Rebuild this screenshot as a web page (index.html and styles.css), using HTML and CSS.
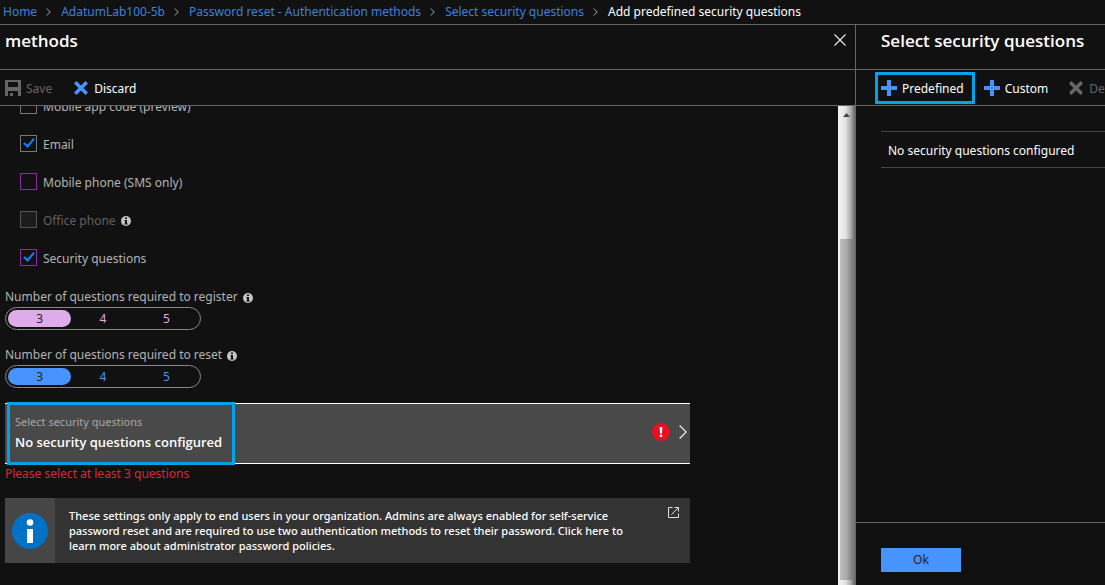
FILE: index.html
```html
<!DOCTYPE html>
<html lang="en">
<head>
<meta charset="utf-8">
<meta name="viewport" content="width=device-width, initial-scale=1">
<title>Select security questions</title>
<link rel="stylesheet" href="styles.css">
</head>
<body>
<svg class="sprite" aria-hidden="true">
  <symbol id="info" viewBox="0 0 10 10"><circle cx="5" cy="5" r="5" fill="#c4c4c4"/><path d="M4 1.500h2v1.600H4zM3.400 4H6v3.400h.7v1H3.300v-1H4V5h-.6z" fill="#111"/></symbol>
  <symbol id="plus" viewBox="0 0 16 16"><path d="M6 0h4v6h6v4h-6v6H6v-6H0V6h6z" fill="#4894fe"/></symbol>
  <symbol id="cross" viewBox="0 0 14 14"><path d="M2.500 0 7 4.500 11.500 0 14 2.500 9.500 7 14 11.500 11.500 14 7 9.500 2.500 14 0 11.500 4.500 7 0 2.500z" fill="currentColor"/></symbol>
  <symbol id="sep" viewBox="0 0 5 8"><path d="M.7.5 4.200 4 .7 7.500" fill="none" stroke="#aaa"/></symbol>
</svg>
<nav class="breadcrumb" aria-label="Breadcrumb">
  <a href="#">Home</a><svg class="sep"><use href="#sep"/></svg>
  <a href="#">AdatumLab100-5b</a><svg class="sep"><use href="#sep"/></svg>
  <a href="#">Password reset - Authentication methods</a><svg class="sep"><use href="#sep"/></svg>
  <a href="#">Select security questions</a><svg class="sep"><use href="#sep"/></svg>
  <span>Add predefined security questions</span>
</nav>
<main class="blades">
  <section class="blade methods">
    <header class="blade-head">
      <h1>methods</h1>
      <button class="close" type="button" aria-label="Close"><svg viewBox="0 0 12 12"><path d="M.5.5l11 11M11.500.5l-11 11" stroke="#eee" stroke-width="1.100"/></svg></button>
    </header>
    <div class="toolbar">
      <button type="button" disabled><svg class="tool-icon" viewBox="0 0 16 16"><path fill="#666" fill-rule="evenodd" d="M0 0h16v16h-3v-5H3v5H0zM3 2v5h10V2z"/><path fill="#666" d="M5 13h3v3H5z"/></svg><span>Save</span></button>
      <button type="button"><svg class="tool-icon cross"><use href="#cross"/></svg><span>Discard</span></button>
    </div>
    <div class="scroll">
      <form class="content">
        <label class="check"><input type="checkbox"><span>Mobile app code (preview)</span></label>
        <label class="check"><input type="checkbox" checked><span>Email</span></label>
        <label class="check edited"><input type="checkbox"><span>Mobile phone (SMS only)</span></label>
        <label class="check off"><input type="checkbox" disabled><span>Office phone</span><svg class="info"><use href="#info"/></svg></label>
        <label class="check edited"><input type="checkbox" checked><span>Security questions</span></label>
        <fieldset class="field edited">
          <legend>Number of questions required to register<svg class="info"><use href="#info"/></svg></legend>
          <div class="segments">
            <label><input type="radio" name="register" checked>3</label>
            <label><input type="radio" name="register">4</label>
            <label><input type="radio" name="register">5</label>
          </div>
        </fieldset>
        <fieldset class="field">
          <legend>Number of questions required to reset<svg class="info"><use href="#info"/></svg></legend>
          <div class="segments">
            <label><input type="radio" name="reset" checked>3</label>
            <label><input type="radio" name="reset">4</label>
            <label><input type="radio" name="reset">5</label>
          </div>
        </fieldset>
        <button class="selector" type="button">
          <span class="selector-text"><span class="selector-label">Select security questions</span><strong>No security questions configured</strong></span>
          <svg class="alert" viewBox="0 0 18 18"><circle cx="9" cy="9" r="9" fill="#e81123"/><path d="M7.600 4h2.800l-.5 6.500H8.100zM7.800 11.700h2.400V14H7.800z" fill="#fff"/></svg>
          <svg class="chevron" viewBox="0 0 8 14"><path d="M.6.5 7.200 7 .6 13.500" fill="none" stroke="#eee" stroke-width="1.200"/></svg>
        </button>
        <p class="error">Please select at least 3 questions</p>
        <a class="notice" href="#">
          <span class="notice-icon"><svg viewBox="0 0 36 36"><circle cx="18" cy="18" r="18" fill="#0072c6"/><circle cx="18" cy="9.500" r="3.300" fill="#fff"/><path d="M15 16h6v14h-6z" fill="#fff"/></svg></span>
          <span class="notice-text">These settings only apply to end users in your organization. Admins are always enabled for self-service password reset and are required to use two authentication methods to reset their password. Click here to learn more about administrator password policies.</span>
          <svg class="external" viewBox="0 0 11 11"><path d="M4.500.5h-4v10h10v-4M6.500.5h4v4M3.500 7.500l7-7" fill="none" stroke="#ddd"/></svg>
        </a>
      </form>
      <div class="scrollbar" aria-hidden="true">
        <svg class="arrow" viewBox="0 0 7 4"><path d="M0 4 3.500 0 7 4z" fill="#444"/></svg>
        <div class="thumb"></div>
      </div>
    </div>
  </section>
  <section class="blade questions">
    <header class="blade-head"><h2>Select security questions</h2></header>
    <div class="toolbar">
      <button class="marked" type="button"><svg class="tool-icon"><use href="#plus"/></svg><span>Predefined</span></button>
      <button type="button"><svg class="tool-icon"><use href="#plus"/></svg><span>Custom</span></button>
      <button type="button" disabled><svg class="tool-icon cross"><use href="#cross"/></svg><span>Delete</span></button>
    </div>
    <p class="empty">No security questions configured</p>
    <footer><button class="ok" type="button">Ok</button></footer>
  </section>
</main>
</body>
</html>
```
FILE: styles.css
```css
*, *::before, *::after { box-sizing: border-box; }
body {
  margin: 0;
  height: 100vh;
  display: flex;
  flex-direction: column;
  overflow: hidden;
  background: #111;
  color: #fff;
  font: 12px/16px "Noto Sans", "Open Sans", sans-serif;
}
h1, h2, p { margin: 0; }
button { font: inherit; color: inherit; background: none; border: 0; padding: 0; }
svg { flex: none; }
.sprite { position: absolute; width: 0; height: 0; }

.breadcrumb {
  display: flex;
  align-items: center;
  flex: none;
  height: 25px;
  padding: 0 3px 1px;
  border-bottom: 1px solid #666;
  white-space: nowrap;
}
.breadcrumb a { color: #3f80dd; text-decoration: none; }
.sep { width: 5px; height: 8px; margin: 0 10px 0 9px; }

.blades { flex: 1; display: flex; min-height: 0; }
.blade { display: flex; flex-direction: column; min-width: 0; }
.methods { flex: 1; }
.questions { flex: 0 0 250px; border-left: 1px solid #666; overflow: hidden; }

.blade-head {
  display: flex;
  justify-content: space-between;
  flex: none;
  height: 45px;
  padding: 4px 9px 0 5px;
  border-bottom: 1px solid #666;
}
.questions .blade-head { padding-left: 25px; }
h1, h2 { font: 600 17px/24px "Open Sans", "Noto Sans", sans-serif; white-space: nowrap; }
.close { width: 12px; height: 22px; }
.close svg { display: block; width: 12px; height: 12px; margin: auto; }

.toolbar {
  display: flex;
  align-items: center;
  gap: 21px;
  flex: none;
  height: 36px;
  padding: 0 5px;
  border-bottom: 1px solid #666;
}
.toolbar button { display: flex; align-items: center; gap: 5px; flex: none; }
.toolbar button:disabled { color: #666; }
.toolbar span { padding-top: 2px; }
.tool-icon { width: 16px; height: 16px; }
.cross { padding: 1px; color: #4894fe; }
.toolbar button:disabled .cross { color: #666; }
.questions .toolbar { padding-left: 19px; gap: 20px; }
.questions .marked { height: 32px; padding: 0 8px 0 3px; border: 3px solid #00a2e8; margin-right: -11px; }

.scroll { flex: 1; display: flex; min-height: 0; }
.content {
  flex: 1;
  display: flex;
  flex-direction: column;
  justify-content: flex-end;
  overflow: hidden;
  padding: 0 148px 22px 5px;
  color: #b4b4b4;
}
.content > * { flex: none; }
.check { display: flex; align-items: center; height: 38px; padding-left: 15px; }
.check input {
  appearance: none;
  width: 17px;
  height: 17px;
  margin: 0 6px 0 0;
  border: 1px solid #777;
  display: grid;
  place-items: center;
}
.check span { padding-top: 3px; }
.check.edited input { border-color: #8a2da5; }
.check input:checked::after {
  content: "";
  width: 6px;
  height: 11px;
  margin-bottom: 3px;
  border: solid #0a84ff;
  border-width: 0 2px 2px 0;
  transform: rotate(40deg);
}
.check.off { color: #606060; }
.check.off input { background: #1c1c1c; border-color: #555; }
.info { width: 10px; height: 10px; margin: 3px 0 0 5px; }

.field { border: 0; margin: 0; padding: 0; height: 58px; }
.field:first-of-type { margin-top: 10px; }
.field + .selector { margin-top: 1px; }
.field legend { display: flex; align-items: center; height: 21px; padding: 0; }
.segments {
  display: flex;
  width: 196px;
  height: 23px;
  padding: 2px;
  border: 1px solid #888;
  border-radius: 12px;
  color: #4894fe;
}
.segments label { flex: 1; display: grid; place-items: center; border-radius: 9px; }
.segments input { position: absolute; appearance: none; margin: 0; }
.segments label:has(:checked) { background: #4894fe; color: #222; }
.edited .segments { color: #dfacea; }
.edited .segments label:has(:checked) { background: #dfacea; }

.selector {
  position: relative;
  display: flex;
  align-items: center;
  height: 61px;
  padding: 0 3px 4px 10px;
  background: #494949;
  border: solid #fff;
  border-width: 1px 0;
  text-align: left;
}
.selector::before {
  content: "";
  position: absolute;
  inset: -2px auto -2px 2px;
  width: 228px;
  border: 3px solid #00a2e8;
}
.selector-text { flex: 1; display: flex; flex-direction: column; }
.selector-label { font-size: 11px; line-height: 20px; color: #a8a8a8; }
.selector strong { font: 600 13px/20px "Open Sans", "Noto Sans", sans-serif; color: #fff; }
.alert { width: 18px; height: 18px; margin-right: 9px; }
.chevron { width: 8px; height: 14px; }
.error { line-height: 20px; color: #d9283c; }

.notice {
  display: flex;
  height: 65px;
  margin-top: 14px;
  background: #333;
  color: #fff;
  text-decoration: none;
}
.notice-icon { flex: none; width: 50px; display: grid; place-items: center; background: #464646; }
.notice-icon svg { width: 36px; height: 36px; }
.notice-text { flex: 1; padding: 10px 32px 0 14px; font-size: 11px; line-height: 15px; font-weight: 500; }
.external { width: 11px; height: 11px; margin: 9px 11px 0 0; }

.scrollbar {
  width: 17px;
  display: flex;
  flex-direction: column;
  align-items: center;
  padding: 7px 2px 5px;
  background: linear-gradient(to right, #f4f4f4, #e2e2e2 45%, #aaa 75%, #666);
}
.arrow { width: 7px; height: 4px; }
.thumb {
  width: 13px;
  margin-top: auto;
  height: 73%;
  background: linear-gradient(to right, #bfbfbf, #aaa 50%, #777);
}

.empty {
  margin: 25px 0 0 25px;
  padding: 11px 7px 8px;
  border: solid #444;
  border-width: 1px 0;
  white-space: nowrap;
}
footer { margin-top: auto; height: 63px; padding: 25px; border-top: 1px solid #666; }
.ok { display: block; width: 80px; height: 24px; background: #4894fe; color: #222; }
```
